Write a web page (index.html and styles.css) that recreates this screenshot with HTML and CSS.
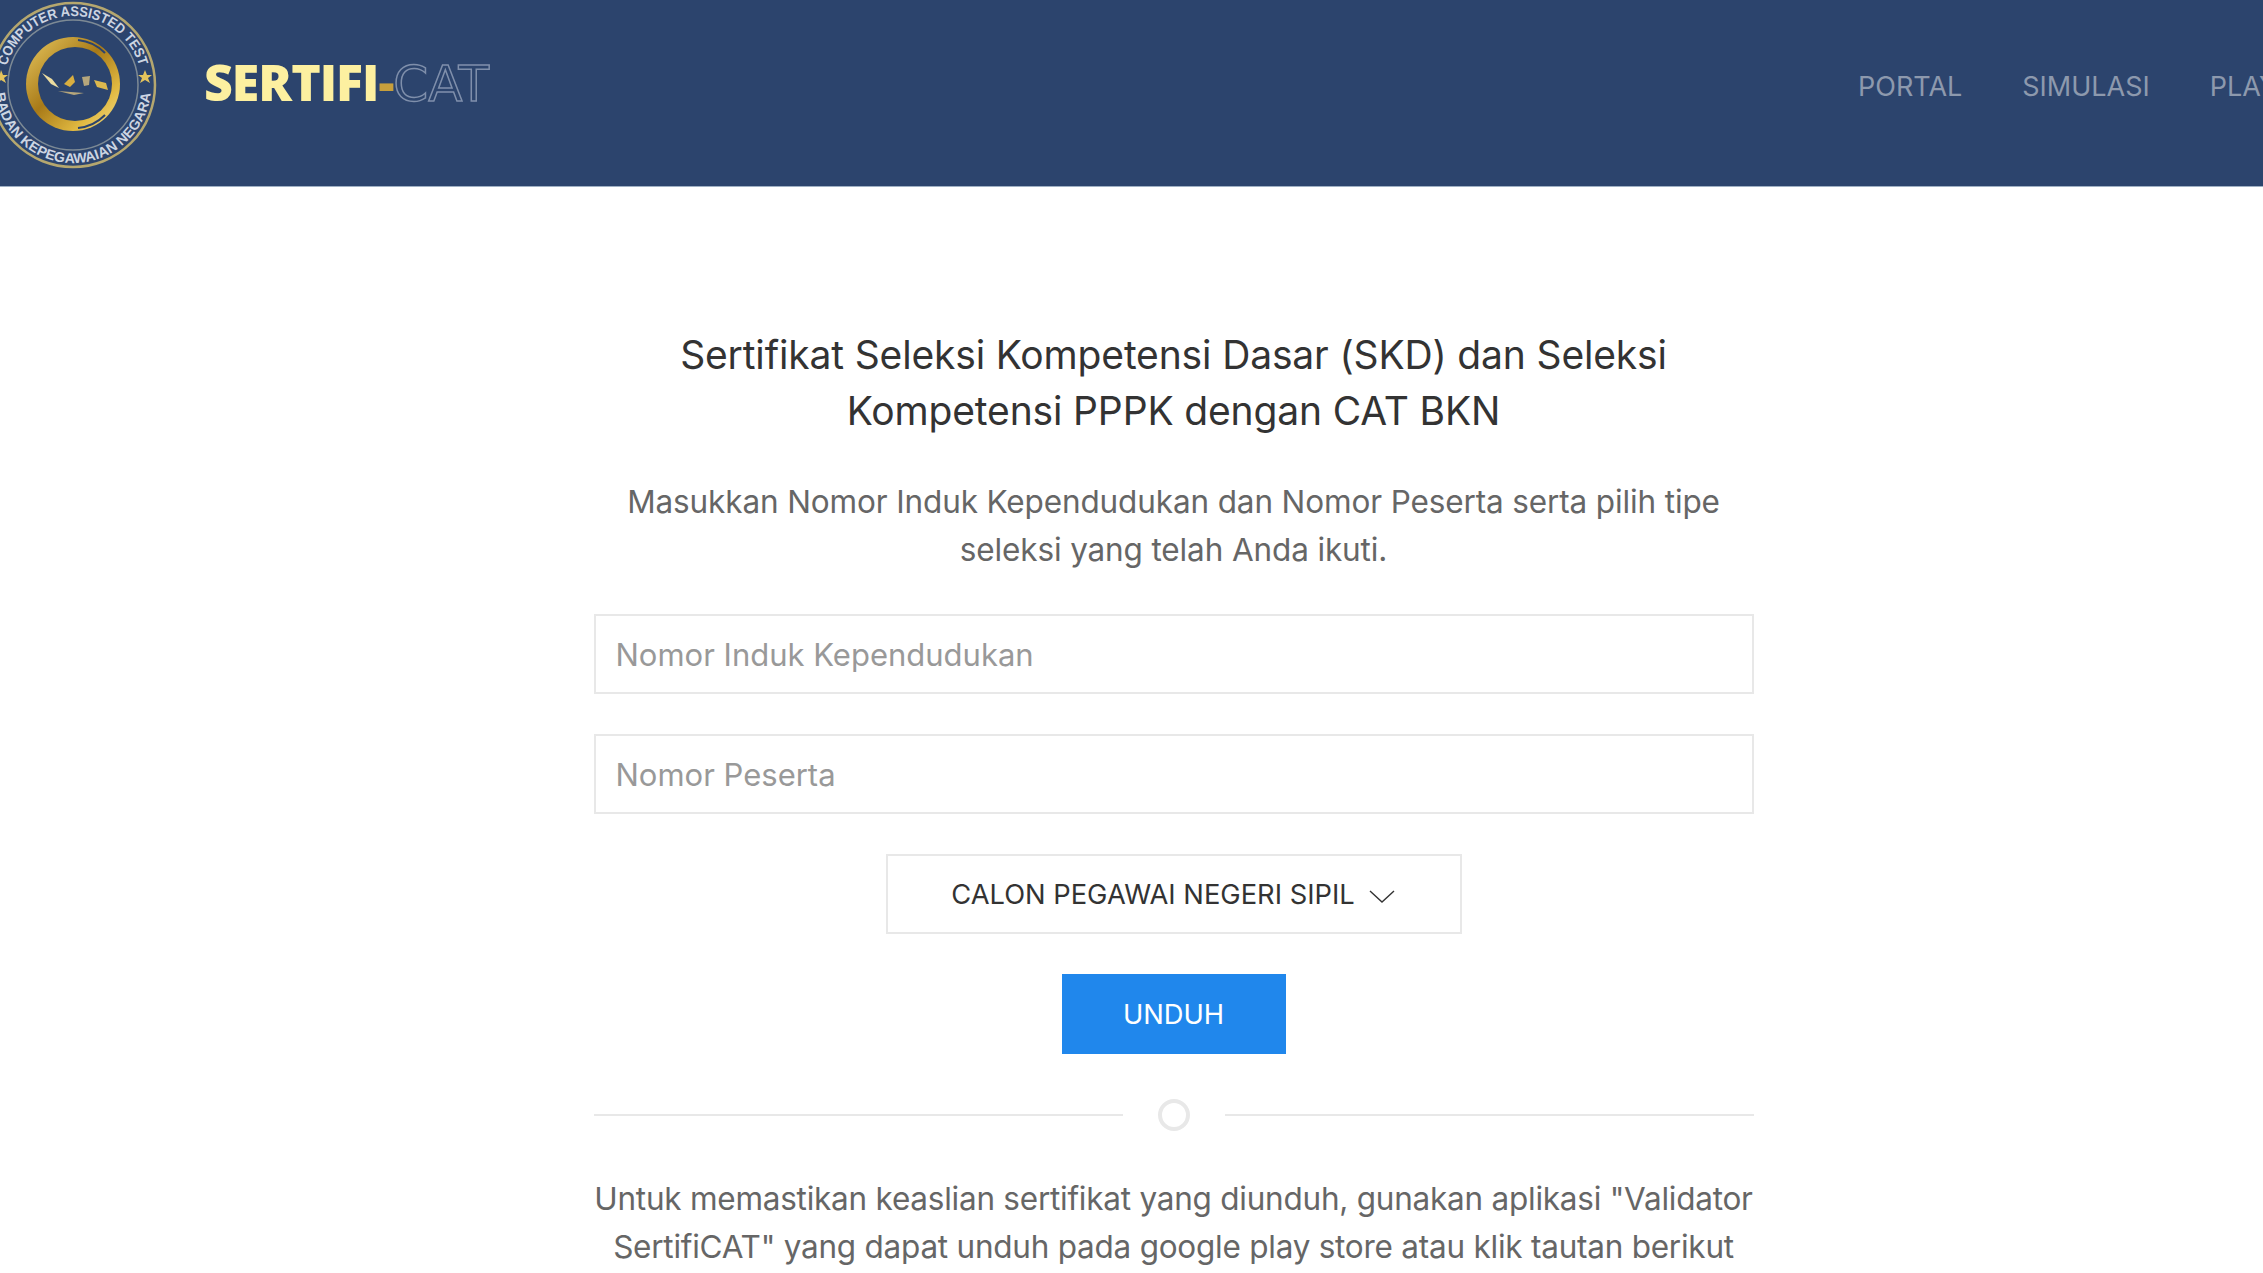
FILE: index.html
```html
<!DOCTYPE html>
<html lang="en">
<head>
  <meta charset="UTF-8" />
  <title>Sertifikat SKD</title>
  <link rel="stylesheet" href="styles.css">
</head>
<body>
  <div class="page">
    <header class="topbar">
      <div class="brand">
        <svg class="brand-logo" width="160" height="170" viewBox="0 0 160 170">
          <defs>
            <linearGradient id="gold" x1="0" y1="0" x2="1" y2="1">
              <stop offset="0" stop-color="#e8c860"/>
              <stop offset="0.45" stop-color="#a87a18"/>
              <stop offset="0.75" stop-color="#e0b840"/>
              <stop offset="1" stop-color="#f4e090"/>
            </linearGradient>
            <path id="arcTop" d="M 4 85 A 69 69 0 0 1 142 85"/>
            <path id="arcBottom" d="M -5 85 A 78 78 0 0 0 151 85"/>
          </defs>
          <circle cx="73" cy="85" r="82" fill="none" stroke="#b5a76f" stroke-width="2.5"/>
          <circle cx="73" cy="85" r="65" fill="none" stroke="#7d8a95" stroke-width="1.5"/>
          <text class="seal-text"><textPath href="#arcTop" startOffset="50%" text-anchor="middle" textLength="178" lengthAdjust="spacingAndGlyphs">COMPUTER ASSISTED TEST</textPath></text>
          <text class="seal-text"><textPath href="#arcBottom" startOffset="50%" text-anchor="middle" textLength="228" lengthAdjust="spacingAndGlyphs">BADAN KEPEGAWAIAN NEGARA</textPath></text>
          <polygon points="145,70 147,75 152,75 148,78 150,83 145,80 140,83 142,78 138,75 143,75" fill="#e4c45c"/>
          <polygon points="1,70 3,75 8,75 4,78 6,83 1,80 0,81 0,74" fill="#e4c45c"/>
          <circle cx="73" cy="84" r="47" fill="url(#gold)"/>
          <circle cx="75" cy="84" r="37" fill="#2c446d"/>
          <path d="M 78 40 A 44 44 0 0 1 105 53" fill="none" stroke="#2c446d" stroke-width="2"/>
          <path d="M 78 128 A 44 44 0 0 0 105 115" fill="none" stroke="#2c446d" stroke-width="2"/>
          <path d="M 42 73 L 52 79 L 59 88 L 51 84 Z" fill="#ecdca0"/>
          <path d="M 64 84 L 73 75 L 75 82 L 70 87 Z" fill="#d8ae40"/>
          <path d="M 82 77 L 90 76 L 89 85 L 84 86 Z" fill="#b5a67c"/>
          <path d="M 94 80 L 106 83 L 108 90 L 97 87 Z" fill="#dcb84e"/>
          <path d="M 58 91 L 84 93 L 74 95 Z" fill="#b5a67c"/>
        </svg>
        <div class="brand-name"><span class="brand-solid">SERTIFI</span><span class="brand-dash">-</span><span class="brand-outline">CAT</span></div>
      </div>
      <nav class="topnav">
        <a href="#">PORTAL</a>
        <a href="#">SIMULASI</a>
        <a href="#">PLAY STORE</a>
      </nav>
    </header>

    <main class="content">
      <h2>Sertifikat Seleksi Kompetensi Dasar (SKD) dan Seleksi Kompetensi PPPK dengan CAT BKN</h2>
      <p class="lead">Masukkan Nomor Induk Kependudukan dan Nomor Peserta serta pilih tipe seleksi yang telah Anda ikuti.</p>

      <form class="cert-form">
        <input type="text" placeholder="Nomor Induk Kependudukan">
        <input type="text" placeholder="Nomor Peserta">
        <div class="type-select">
          <span>CALON PEGAWAI NEGERI SIPIL</span>
          <svg class="caret" width="28" height="16" viewBox="0 0 28 16"><path d="M2 3 L14 14 L26 3" fill="none" stroke="#333" stroke-width="1.4"/></svg>
        </div>
        <button type="button">UNDUH</button>
      </form>

      <div class="divider">
        <span class="divider-line"></span>
        <span class="divider-dot"></span>
        <span class="divider-line"></span>
      </div>

      <p class="lead lead-tight">Untuk memastikan keaslian sertifikat yang diunduh, gunakan aplikasi "Validator SertifiCAT" yang dapat unduh pada google play store atau klik tautan berikut</p>
    </main>
  </div>
</body>
</html>
```

FILE: styles.css
```css
html, body {
  height: 100%;
}

body {
  margin: 0;
  background: #fff;
  font-family: 'Inter', sans-serif;
  color: #666;
  overflow: hidden;
}

/* the original page is wider than the window, so it runs off to the right */
.page {
  width: 2347px;
}

.topbar {
  display: flex;
  justify-content: space-between;
  height: 186px;
  background: #2c446d;
  border-bottom: 1px solid #9fb0c4;
  overflow: hidden;
}

.brand {
  display: flex;
  align-items: center;
  flex-shrink: 0;
}

.brand-logo {
  display: block;
  margin-bottom: 16px;
}

.seal-text {
  font-family: 'Liberation Sans', sans-serif;
  font-size: 14px;
  font-weight: 700;
  fill: #cdd5e2;
}

.brand-name {
  margin-left: 44px;
  margin-bottom: 22px;
  font-family: 'Open Sans', sans-serif;
  font-size: 50px;
  font-weight: 800;
  letter-spacing: -1px;
}

.brand-solid {
  color: #fdf0a0;
}

.brand-dash {
  color: #c79f3c;
}

.brand-outline {
  color: transparent;
  font-family: 'DejaVu Sans', sans-serif;
  font-weight: 400;
  letter-spacing: 0;
  -webkit-text-stroke: 1.5px #7f8fab;
}

.topnav {
  display: flex;
  gap: 60px;
  flex-shrink: 0;
  width: 489px;
  padding-top: 69px;
  white-space: nowrap;
}

.topnav a {
  flex-shrink: 0;
  color: #8d99ad;
  font-size: 27px;
  line-height: 36px;
  text-decoration: none;
}

.content {
  width: 1160px;
  margin: 0 auto;
  padding-top: 140px;
  text-align: center;
}

h2 {
  margin: 0 0 39px;
  padding: 0 60px;
  color: #333;
  font-size: 39px;
  font-weight: 400;
  letter-spacing: -0.15px;
  line-height: 56px;
}

.lead {
  margin: 0;
  font-size: 31.5px;
  letter-spacing: -0.13px;
  line-height: 48px;
}

.lead-tight {
  letter-spacing: -0.24px;
}

.cert-form {
  display: flex;
  flex-direction: column;
  align-items: center;
  gap: 40px;
  margin-top: 40px;
}

.cert-form input {
  width: 100%;
  height: 80px;
  box-sizing: border-box;
  padding: 0 20px;
  border: 2px solid #e8e8e8;
  font-family: inherit;
  font-size: 31px;
  outline: none;
}

.cert-form input::placeholder {
  color: #999;
}

.type-select {
  display: flex;
  align-items: center;
  justify-content: center;
  gap: 13px;
  width: 576px;
  height: 80px;
  box-sizing: border-box;
  border: 2px solid #e8e8e8;
  color: #333;
  font-size: 27.3px;
}

.caret {
  margin-top: 4px;
}

.cert-form button {
  width: 224px;
  height: 80px;
  border: none;
  background: #2087ec;
  color: #fff;
  font-family: inherit;
  font-size: 27.3px;
}

.divider {
  display: flex;
  align-items: center;
  gap: 35px;
  margin: 45px 0 44px;
}

.divider-line {
  flex: 1;
  height: 2px;
  background: #e8e8e8;
}

.divider-dot {
  width: 32px;
  height: 32px;
  box-sizing: border-box;
  border: 4px solid #e8e8e8;
  border-radius: 50%;
}
```
